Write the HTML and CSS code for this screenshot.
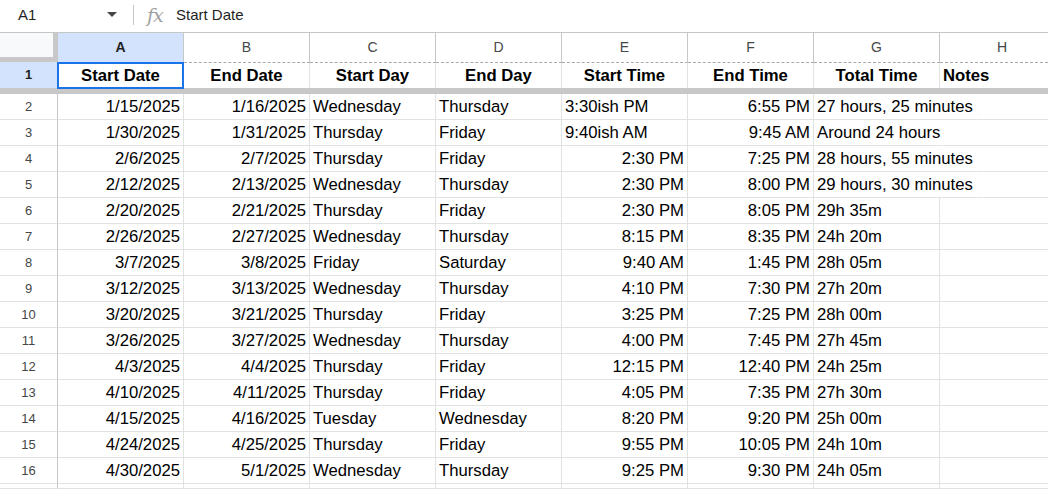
FILE: index.html
```html
<!DOCTYPE html>
<html>
<head>
<meta charset="utf-8">
<link rel="stylesheet" href="styles.css">
</head>
<body>
<div class="formula-bar">
  <div class="namebox">
    <span class="ref">A1</span>
    <svg class="caret" width="10" height="6" viewBox="0 0 10 6"><polygon points="0,0 10,0 5,5" fill="#444746"/></svg>
  </div>
  <div class="sep"></div>
  <span class="fx">fx</span>
  <span class="formula">Start Date</span>
</div>
<div class="sheet">
  <div class="row colhead">
    <div class="corner"></div>
    <div class="ch sel">A</div>
    <div class="ch">B</div>
    <div class="ch">C</div>
    <div class="ch">D</div>
    <div class="ch">E</div>
    <div class="ch">F</div>
    <div class="ch">G</div>
    <div class="ch">H</div>
  </div>
  <div class="row r1">
    <div class="rh sel">1</div>
    <div class="cell b c active">Start Date</div>
    <div class="cell b c">End Date</div>
    <div class="cell b c">Start Day</div>
    <div class="cell b c">End Day</div>
    <div class="cell b c">Start Time</div>
    <div class="cell b c">End Time</div>
    <div class="cell b c">Total Time</div>
    <div class="cell b">Notes</div>
  </div>
  <div class="band"></div>
  <div class="row"><div class="rh">2</div><div class="cell r">1/15/2025</div><div class="cell r">1/16/2025</div><div class="cell">Wednesday</div><div class="cell">Thursday</div><div class="cell">3:30ish PM</div><div class="cell r">6:55 PM</div><div class="cell ov">27 hours, 25 minutes</div><div class="cell"></div></div>
  <div class="row"><div class="rh">3</div><div class="cell r">1/30/2025</div><div class="cell r">1/31/2025</div><div class="cell">Thursday</div><div class="cell">Friday</div><div class="cell">9:40ish AM</div><div class="cell r">9:45 AM</div><div class="cell ov">Around 24 hours</div><div class="cell"></div></div>
  <div class="row"><div class="rh">4</div><div class="cell r">2/6/2025</div><div class="cell r">2/7/2025</div><div class="cell">Thursday</div><div class="cell">Friday</div><div class="cell r">2:30 PM</div><div class="cell r">7:25 PM</div><div class="cell ov">28 hours, 55 minutes</div><div class="cell"></div></div>
  <div class="row"><div class="rh">5</div><div class="cell r">2/12/2025</div><div class="cell r">2/13/2025</div><div class="cell">Wednesday</div><div class="cell">Thursday</div><div class="cell r">2:30 PM</div><div class="cell r">8:00 PM</div><div class="cell ov">29 hours, 30 minutes</div><div class="cell"></div></div>
  <div class="row"><div class="rh">6</div><div class="cell r">2/20/2025</div><div class="cell r">2/21/2025</div><div class="cell">Thursday</div><div class="cell">Friday</div><div class="cell r">2:30 PM</div><div class="cell r">8:05 PM</div><div class="cell">29h 35m</div><div class="cell"></div></div>
  <div class="row"><div class="rh">7</div><div class="cell r">2/26/2025</div><div class="cell r">2/27/2025</div><div class="cell">Wednesday</div><div class="cell">Thursday</div><div class="cell r">8:15 PM</div><div class="cell r">8:35 PM</div><div class="cell">24h 20m</div><div class="cell"></div></div>
  <div class="row"><div class="rh">8</div><div class="cell r">3/7/2025</div><div class="cell r">3/8/2025</div><div class="cell">Friday</div><div class="cell">Saturday</div><div class="cell r">9:40 AM</div><div class="cell r">1:45 PM</div><div class="cell">28h 05m</div><div class="cell"></div></div>
  <div class="row"><div class="rh">9</div><div class="cell r">3/12/2025</div><div class="cell r">3/13/2025</div><div class="cell">Wednesday</div><div class="cell">Thursday</div><div class="cell r">4:10 PM</div><div class="cell r">7:30 PM</div><div class="cell">27h 20m</div><div class="cell"></div></div>
  <div class="row"><div class="rh">10</div><div class="cell r">3/20/2025</div><div class="cell r">3/21/2025</div><div class="cell">Thursday</div><div class="cell">Friday</div><div class="cell r">3:25 PM</div><div class="cell r">7:25 PM</div><div class="cell">28h 00m</div><div class="cell"></div></div>
  <div class="row"><div class="rh">11</div><div class="cell r">3/26/2025</div><div class="cell r">3/27/2025</div><div class="cell">Wednesday</div><div class="cell">Thursday</div><div class="cell r">4:00 PM</div><div class="cell r">7:45 PM</div><div class="cell">27h 45m</div><div class="cell"></div></div>
  <div class="row"><div class="rh">12</div><div class="cell r">4/3/2025</div><div class="cell r">4/4/2025</div><div class="cell">Thursday</div><div class="cell">Friday</div><div class="cell r">12:15 PM</div><div class="cell r">12:40 PM</div><div class="cell">24h 25m</div><div class="cell"></div></div>
  <div class="row"><div class="rh">13</div><div class="cell r">4/10/2025</div><div class="cell r">4/11/2025</div><div class="cell">Thursday</div><div class="cell">Friday</div><div class="cell r">4:05 PM</div><div class="cell r">7:35 PM</div><div class="cell">27h 30m</div><div class="cell"></div></div>
  <div class="row"><div class="rh">14</div><div class="cell r">4/15/2025</div><div class="cell r">4/16/2025</div><div class="cell">Tuesday</div><div class="cell">Wednesday</div><div class="cell r">8:20 PM</div><div class="cell r">9:20 PM</div><div class="cell">25h 00m</div><div class="cell"></div></div>
  <div class="row"><div class="rh">15</div><div class="cell r">4/24/2025</div><div class="cell r">4/25/2025</div><div class="cell">Thursday</div><div class="cell">Friday</div><div class="cell r">9:55 PM</div><div class="cell r">10:05 PM</div><div class="cell">24h 10m</div><div class="cell"></div></div>
  <div class="row"><div class="rh">16</div><div class="cell r">4/30/2025</div><div class="cell r">5/1/2025</div><div class="cell">Wednesday</div><div class="cell">Thursday</div><div class="cell r">9:25 PM</div><div class="cell r">9:30 PM</div><div class="cell">24h 05m</div><div class="cell"></div></div>
  <div class="row short"><div class="rh"></div><div class="cell"></div><div class="cell"></div><div class="cell"></div><div class="cell"></div><div class="cell"></div><div class="cell"></div><div class="cell"></div><div class="cell"></div></div>
</div>
</body>
</html>
```
FILE: styles.css
```css
html, body {
  margin: 0;
  padding: 0;
  background: #fff;
  overflow: hidden;
  width: 1048px;
  height: 489px;
  font-family: "Liberation Sans", Arial, sans-serif;
  color: #000;
}

.formula-bar {
  height: 29px;
  padding-bottom: 3px;
  border-bottom: 1px solid #c4c7c5;
  display: flex;
  align-items: center;
}

.namebox {
  width: 122px;
  box-sizing: border-box;
  padding: 0 5px 0 18px;
  display: flex;
  align-items: center;
  justify-content: space-between;
}

.ref {
  font-size: 15px;
  color: #1f1f1f;
}

.caret {
  display: block;
}

.sep {
  width: 1px;
  height: 20px;
  background: #c4c7c5;
  margin-left: 11px;
}

.fx {
  margin-left: 13px;
  font-family: "DejaVu Serif", "Liberation Serif", serif;
  font-style: italic;
  font-size: 19px;
  color: #a0a0a0;
  letter-spacing: -1px;
  width: 18px;
}

.formula {
  margin-left: 11px;
  font-size: 15px;
  color: #1f1f1f;
}

.sheet {
  width: 1048px;
}

.row {
  display: flex;
  height: 26px;
}

.row.short {
  height: 5px;
  overflow: hidden;
}

.colhead {
  height: 29px;
}

.corner {
  flex: 0 0 58px;
  box-sizing: border-box;
  background: #f8f9fa;
  border-right: 5px solid #c8c8c8;
  border-bottom: 5px solid #c8c8c8;
}

.ch {
  flex: 0 0 126px;
  box-sizing: border-box;
  border-right: 1px solid #c4c7c5;
  text-align: center;
  line-height: 29px;
  font-size: 14px;
  color: #444746;
}

.ch:last-child {
  flex: 1 1 0;
  min-width: 0;
  text-align: left;
  padding-left: 57px;
  border-right: none;
}

.ch.sel {
  background: #d3e3fd;
  color: #1f1f1f;
  font-weight: bold;
}

.rh {
  flex: 0 0 58px;
  box-sizing: border-box;
  border-right: 1px solid #c4c7c5;
  border-bottom: 1px solid #e1e3e1;
  text-align: center;
  line-height: 25px;
  font-size: 13px;
  color: #444746;
}

.rh.sel {
  background: #d3e3fd;
  color: #1f1f1f;
  font-weight: bold;
  border-bottom: none;
  line-height: 26px;
}

.cell {
  flex: 0 0 126px;
  box-sizing: border-box;
  border-right: 1px solid #e1e3e1;
  border-bottom: 1px solid #e1e3e1;
  padding: 0 3px;
  line-height: 25px;
  font-size: 16.7px;
  white-space: nowrap;
  overflow: hidden;
}

.cell:last-child {
  flex: 1 1 0;
  min-width: 0;
  border-right: none;
}

.cell.r { text-align: right; }
.cell.c { text-align: center; }
.cell.b { font-weight: bold; }

.cell.ov {
  overflow: visible;
  border-right-color: #fff;
}

.r1 .cell {
  border-bottom: none;
  border-top: 1px dashed #a8a8a8;
  line-height: 26px;
}

.r1 .cell.active {
  border-top: none;
  line-height: 28px;
  position: relative;
  overflow: visible;
}

.r1 .cell.active::after {
  content: "";
  position: absolute;
  top: 0;
  left: -1px;
  width: 127px;
  height: 27px;
  box-sizing: border-box;
  border: 2px solid #1a73e8;
  z-index: 2;
}

.band {
  height: 6px;
  background: #c8c8c8;
}
```
